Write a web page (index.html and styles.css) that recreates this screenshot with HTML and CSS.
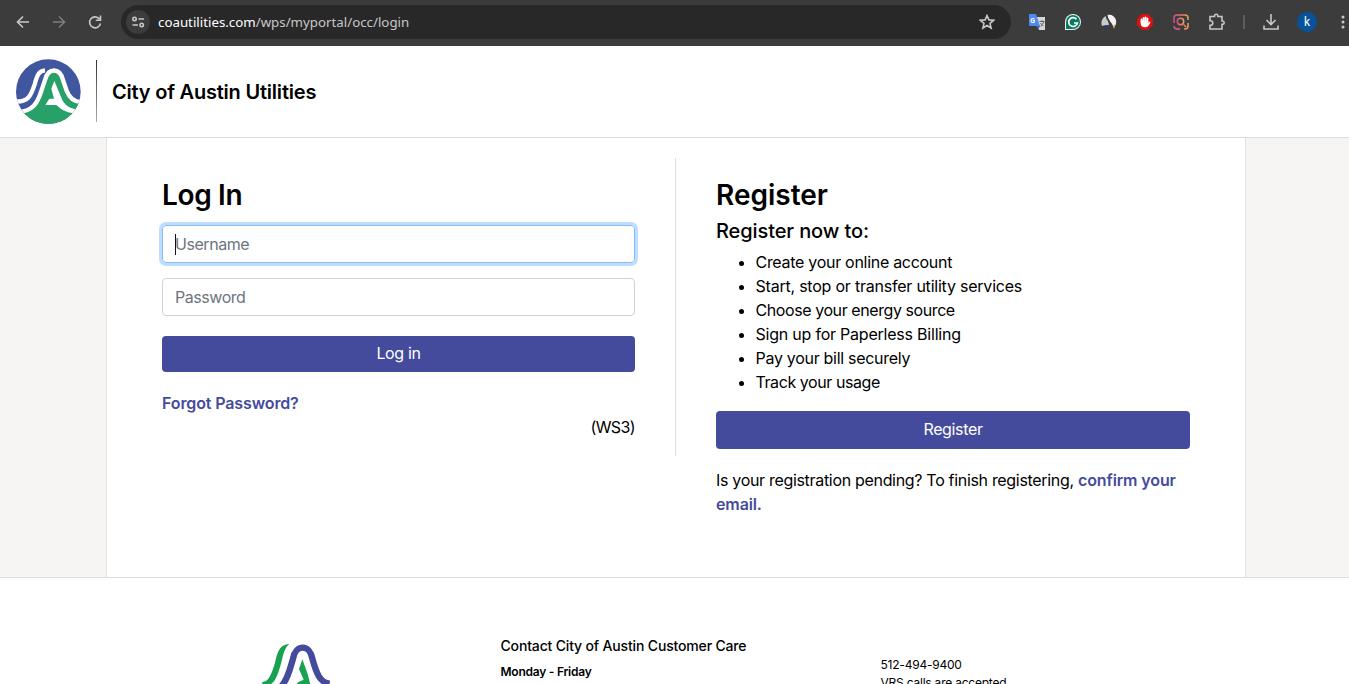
FILE: index.html
```html
<!DOCTYPE html>
<html lang="en">
<head>
<meta charset="utf-8">
<title>City of Austin Utilities</title>
<link rel="stylesheet" href="styles.css">
</head>
<body>
<div class="toolbar">
  <svg class="nav" width="110" height="46" viewBox="0 0 110 46"><path d="M29 22H18M23 16.500l-5.500 5.500 5.500 5.500" class="ln"/><path d="M53 22h11M59 16.500l5.500 5.500-5.500 5.500" class="ln dim"/><path d="M99.500 19a5.500 5.500 0 1 0 1 4.500M100.500 15.500v4.700h-4.700" class="ln"/></svg>
  <div class="address">
    <span class="tune"><svg width="16" height="16" viewBox="0 0 16 16"><g class="ln"><circle cx="4.500" cy="5" r="1.700"/><path d="M8.500 5H14M2.500 11H8"/><circle cx="11.700" cy="11" r="1.700"/></g></svg></span>
    <span class="url"><b>coautilities.com</b>/wps/myportal/occ/login</span>
    <svg class="star" width="16" height="16" viewBox="0 0 16 16"><path class="ln" d="M8 1.600l1.900 4.300 4.700.4-3.600 3.100 1.100 4.600L8 11.500 3.900 14 5 9.400 1.400 6.300l4.700-.4z"/></svg>
  </div>
  <div class="extensions">
    <svg width="18" height="18" viewBox="0 0 18 18"><path d="M7 4h10v13H11z" fill="#d7d7d7"/><path d="M1 1h7l4 12H2q-1 0-1-1z" fill="#5088ed"/><path d="M8.500 13h4L10 16z" fill="#356ac3"/><path d="M11.500 8.500h5M14 7v1.500M16 8.500q-1 3-3.500 4.500M12.500 10q1 2 3 3" stroke="#666" fill="none"/><text x="2.300" y="10" class="tiny">G</text></svg>
    <svg width="18" height="18" viewBox="0 0 18 18"><path d="M1 17V9a8 8 0 1 1 8 8z" fill="#e7f3ef"/><path d="M2 16V9a7 7 0 1 1 7 7z" fill="#087b62"/><path d="M12.500 6.300A4.400 4.400 0 1 0 13.400 10H10" fill="none" stroke="#fff" stroke-width="1.700"/></svg>
    <svg width="18" height="18" viewBox="0 0 18 18"><path d="M6 3C2 5 .5 9 2 13l7-1q0-5-3-9z" fill="#c9c9c9"/><path d="M7.500 2c4-1 7 1 8.500 5 .8 3-.5 6-2.500 8C13 10 8 8 7.500 2z" fill="#f2f2f2"/><path d="M6.500 3c0 5 5.500 6 5.500 12" stroke="#3c3c3c" stroke-width="1.500" fill="none"/><path d="M2 13l6-1-1 3H4z" fill="#303866"/><path d="M13 13l2.500-2-1.500 5z" fill="#e8a23a"/></svg>
    <svg width="18" height="18" viewBox="0 0 18 18"><path d="M6 1h6l5 5v6l-5 5H6l-5-5V6z" fill="#dc1010"/><path d="M5.500 9V6.500M7.500 9V4.800M9.500 9V4.300M11.500 9V5.500" stroke="#fff" stroke-width="1.800" stroke-linecap="round"/><path d="M4.700 8h7.600v2l1.500-1.500.7.800-2 3.500q-1 1.500-3.500 1.500-4.300 0-4.300-4.300z" fill="#fff"/></svg>
    <svg width="18" height="18" viewBox="0 0 18 18"><defs><linearGradient id="ig" x1="0" x2="1"><stop stop-color="#d0508d"/><stop offset="1" stop-color="#f0a05a"/></linearGradient></defs><g fill="none" stroke="url(#ig)" stroke-width="1.500"><path d="M2 10V5q0-3 3-3h8q3 0 3 3v2M16 10v3q0 3-3 3h-1M8 16H5q-3 0-3-3"/><circle cx="8.500" cy="8.500" r="3.200"/><path d="M11 11l3 3"/></g></svg>
    <svg width="18" height="18" viewBox="0 0 18 18"><path d="M2 3.500h4.500V3a1.700 1.700 0 0 1 3.400 0v.5H14V8h.5a1.700 1.700 0 0 1 0 3.400H14V16H2v-3.700h.5a2.300 2.300 0 0 0 0-4.600H2z" class="ln"/></svg>
  </div>
  <span class="sep"></span>
  <svg class="download" width="18" height="18" viewBox="0 0 18 18"><path d="M9 1v10M4.500 7L9 11.500 13.500 7M2 12.500V16h14v-3.500" class="ln"/></svg>
  <span class="avatar">k</span>
  <svg class="more" width="6" height="16" viewBox="0 0 6 16"><g fill="#c7c7c7"><circle cx="3" cy="3" r="1.500"/><circle cx="3" cy="8" r="1.500"/><circle cx="3" cy="13" r="1.500"/></g></svg>
</div>
<header class="header">
  <svg class="logo" width="66" height="66" viewBox="0 0 198 198"><defs><clipPath id="disc"><circle cx="100" cy="101" r="97"/></clipPath></defs><g clip-path="url(#disc)"><path fill="#40569f" d="M0 0h198v198H0z"/><path fill="#27a168" d="M5 162C54 162 68 133 79 99L90 66C100 28 134 28 144 66L155 98Q168 132 200 132V198H5z"/><g fill="none" stroke="#fff" stroke-width="13"><path d="M-2 130C40 134 48 112 59 79C67 50 73 38 90 37"/><path d="M5 162C54 162 68 133 79 99L90 66C100 28 134 28 144 66L155 98Q168 132 200 132"/></g><path fill="#fff" d="M118 68L109 92L117 122H103L91 141H124C138 154 155 167 198 168V155C164 154 148 142 139 119z"/></g></svg>
  <span class="rule"></span><strong class="brand">City of Austin Utilities</strong>
</header>
<main class="backdrop">
  <div class="panel">
    <section class="login">
      <h1 class="snug">Log In</h1>
      <div class="field focused"><span class="caret"></span>Username</div>
      <div class="field">Password</div>
      <button class="btn">Log in</button>
      <a class="link forgot">Forgot Password?</a>
      <div class="server">(WS3)</div>
    </section>
    <section class="register">
      <h1>Register</h1>
      <h2>Register now to:</h2>
      <ul><li>Create your online account</li><li class="airy">Start, stop or transfer utility services</li><li class="tight">Choose your energy source</li><li class="airy">Sign up for Paperless Billing</li><li>Pay your bill securely</li><li class="tight">Track your usage</li></ul>
      <button class="btn tall">Register</button>
      <p>Is your registration pending? To finish registering, <a class="link">confirm your<br>email.</a></p>
    </section>
  </div>
</main>
<footer class="footer">
  <svg class="mark" width="84" height="48" viewBox="0 0 252 144"><path d="M22 138C42 137 50 112 60 80C68 45 75 25 103 24C92 32 86 48 80 75C70 112 62 138 45 146H22z" fill="#17a150"/><path d="M78 152C100 130 107 90 114 68C122 24 164 24 172 68C184 112 195 140 224 143" fill="none" stroke="#454b9c" stroke-width="19"/><path d="M142 70L132 99L146 131L130 138L124 146H166L158 114z" fill="#17a150"/></svg>
  <div class="contact"><div class="title">Contact City of Austin Customer Care</div><strong>Monday - Friday</strong></div>
  <div class="phone"><div>512-494-9400</div><div class="vrs">VRS calls are accepted</div></div>
</footer>
</body>
</html>
```
FILE: styles.css
```css
* { box-sizing: border-box; }
body { margin: 0; height: 684px; overflow: hidden; background: #fff; color: #000; font: 16px/24px Inter, "Liberation Sans", sans-serif; }
svg { display: block; flex: none; }
.toolbar { height: 46px; background: #3c3c3c; display: flex; align-items: center; padding-bottom: 2px; }
.nav { width: 121px; margin: 2px 0 0; padding-right: 11px; }
.ln { fill: none; stroke: #c7c7c7; stroke-width: 1.6; }
.dim { stroke: #7d7d7d; }
.address { width: 890px; height: 34px; border-radius: 17px; background: #282828; display: flex; align-items: center; padding: 0 16px 0 5px; }
.tune { width: 24px; height: 24px; border-radius: 50%; background: #3c3c3c; display: grid; place-items: center; }
.url { font: 13.3px/20px "Noto Sans", sans-serif; color: #c7c7c7; margin-left: 8px; flex: 1; }
.url b { font-weight: 400; color: #fff; }
.extensions { display: flex; gap: 18px; margin-left: 17px; }
.tiny { font: bold 7px Roboto, sans-serif; fill: #fff; }
.sep { width: 2px; height: 14px; background: #5d5d5d; margin-left: 17px; }
.download { margin-left: 17px; }
.avatar { width: 20px; height: 20px; border-radius: 50%; background: #06539b; color: #fff; font: 12px/20px Roboto, sans-serif; text-align: center; margin-left: 17px; }
.more { margin-left: 23px; }
.header { height: 92px; display: flex; align-items: center; padding: 0 0 1px 15px; border-bottom: 1px solid #dedede; }
.rule { width: 1px; height: 62px; margin: 0 15px; background: linear-gradient(#333, #aaa); }
.brand { font-size: 20px; font-weight: 600; letter-spacing: -.21px; padding-top: 2px; }
.backdrop { height: 440px; background: #f6f5f4; border-bottom: 1px solid #dedede; }
.panel { width: 1140px; height: 439px; margin-left: 106px; background: #fff; border: solid #e2e2e2; border-width: 0 1px; padding-top: 20px; display: flex; }
.login { width: 569px; height: 298px; padding: 19px 40px 0 55px; border-right: 1px solid #dedede; }
.register { width: 514px; padding: 19px 0 0 40px; }
h1 { font-size: 28px; line-height: 36px; font-weight: 600; margin: 0; }
.snug { letter-spacing: -.35px; }
.field { height: 38px; border: 1px solid #ced4da; border-radius: 4px; padding: 0 12px; color: #6c757d; display: flex; align-items: center; letter-spacing: -.45px; }
.login h1 { margin-bottom: 12px; }
.focused { border-color: #80bdff; box-shadow: 0 0 0 3px #bfdeff; margin-bottom: 15px; }
.caret { width: 1px; height: 21px; background: #111; margin-right: -1px; }
.btn { display: block; width: 100%; height: 36px; margin: 20px 0 0; padding: 0 0 2px; border: 0; border-radius: 4px; background: #454b9c; color: #fff; font: inherit; letter-spacing: -.35px; }
.link { color: #454b9c; font-weight: 600; letter-spacing: -.12px; }
.forgot { display: block; margin-top: 19px; }
.server { text-align: right; letter-spacing: -.6px; }
h2 { font-size: 20px; line-height: 24px; font-weight: 500; letter-spacing: -.1px; margin: 6px 0 7px; }
ul { margin: 0; padding-left: 39.500px; letter-spacing: -.29px; }
.airy { letter-spacing: -.22px; }
.tight { letter-spacing: -.42px; }
.tall { height: 38px; margin-top: 17px; }
p { margin: 19px 0 0; white-space: nowrap; letter-spacing: -.315px; }
.footer { display: flex; height: 106px; overflow: hidden; }
.mark { margin: 58px 0 0 255px; }
.contact { width: 380px; margin: 56px 0 0 161.500px; font-size: 12px; letter-spacing: -.24px; }
.title { font-size: 14px; font-weight: 500; letter-spacing: -.16px; margin-bottom: 2px; }
.contact strong { font-weight: 600; }
.phone { font-size: 12px; line-height: 18px; margin-top: 78px; letter-spacing: -.22px; }
```
